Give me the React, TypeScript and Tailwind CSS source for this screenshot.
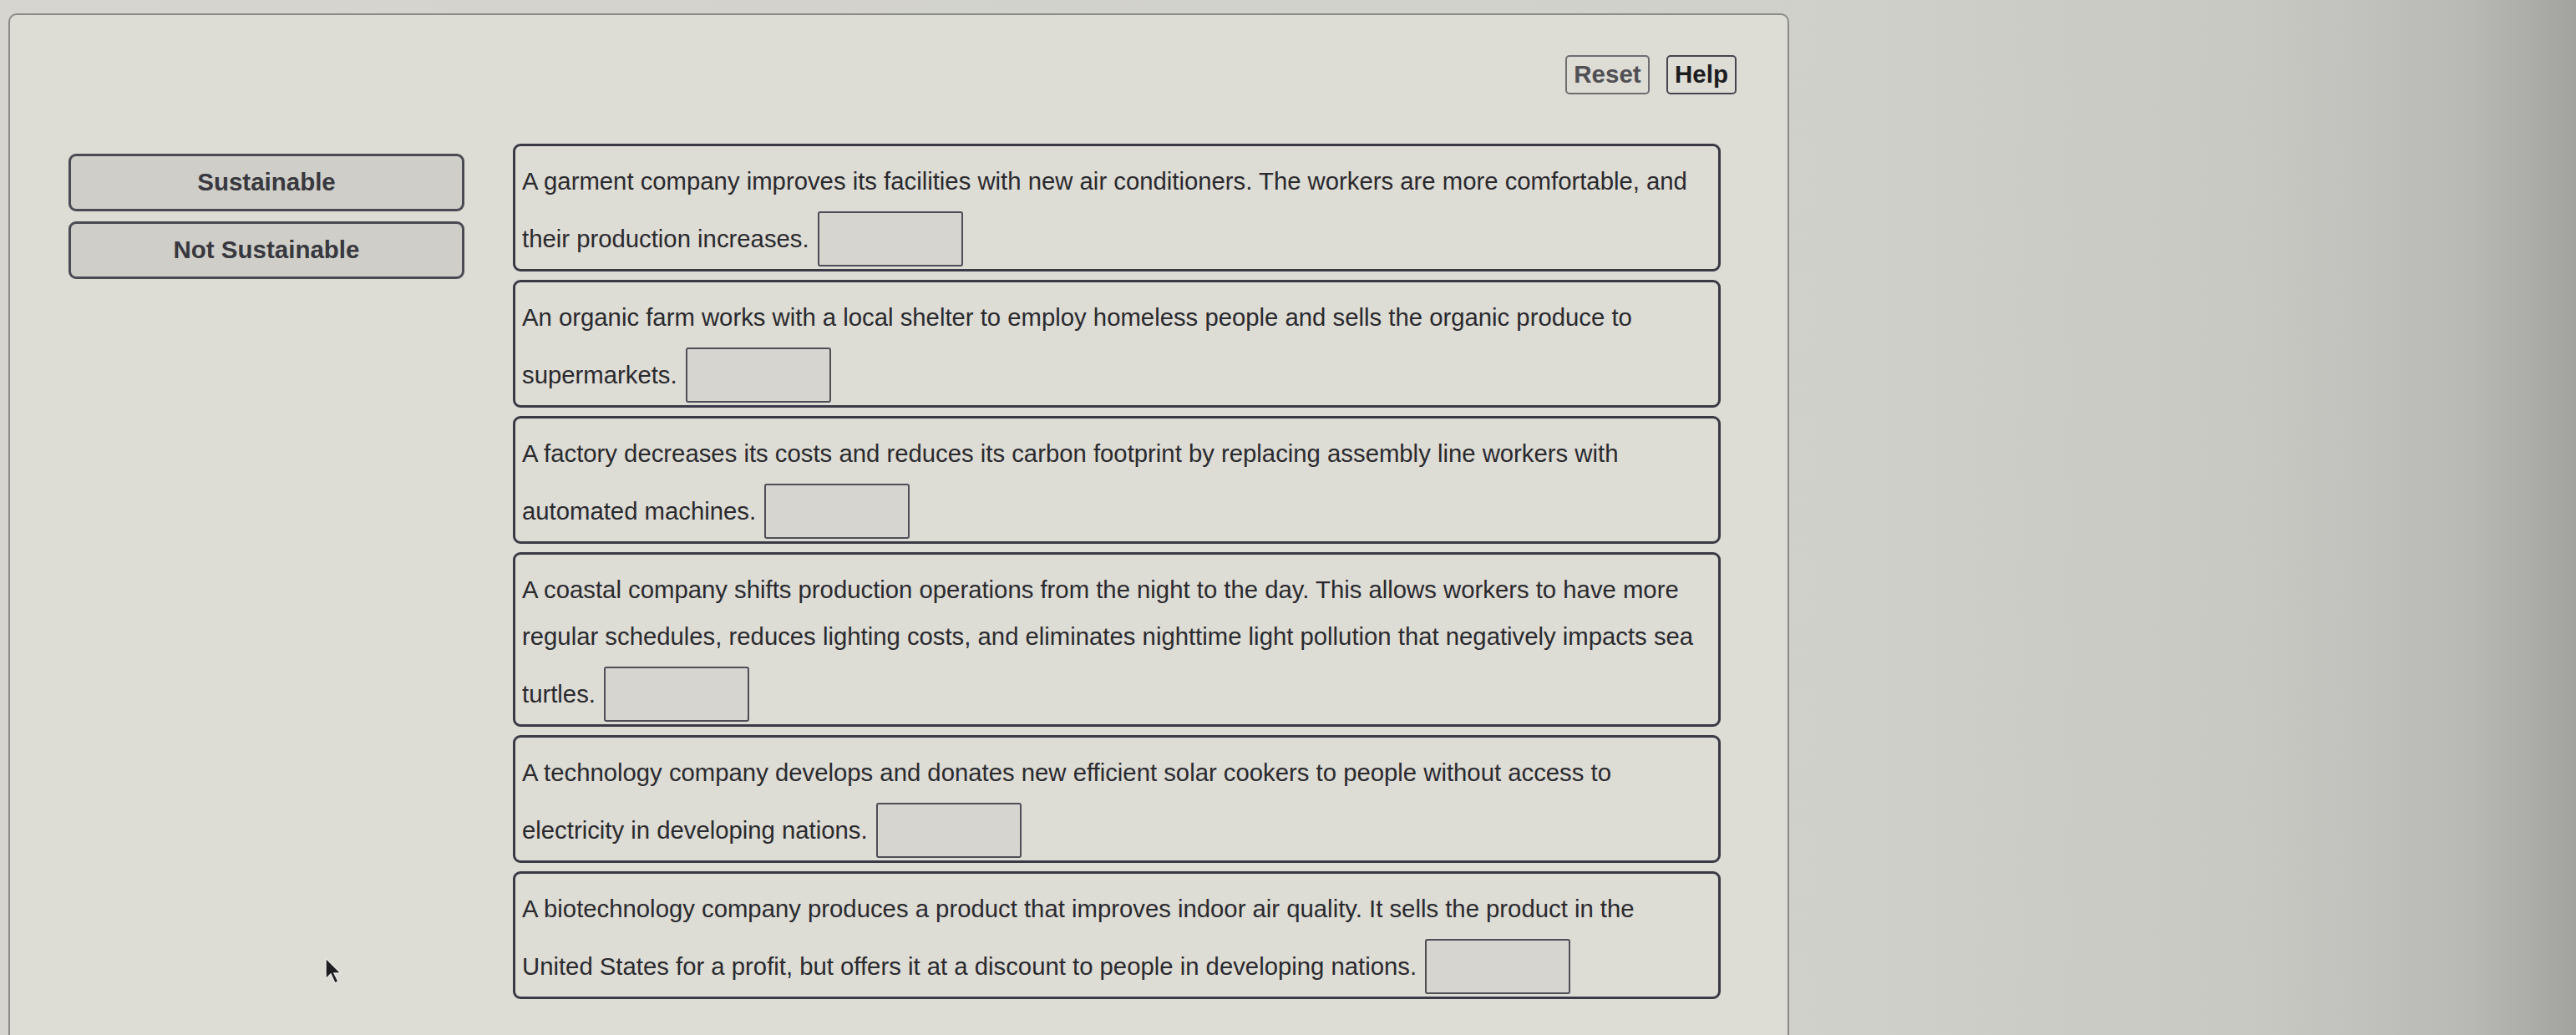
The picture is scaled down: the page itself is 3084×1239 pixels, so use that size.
import React from "react";

type Item = { lines: string[]; last: string };

const items: Item[] = [
  {
    lines: [
      "A garment company improves its facilities with new air conditioners. The workers are more comfortable, and",
    ],
    last: "their production increases.",
  },
  {
    lines: [
      "An organic farm works with a local shelter to employ homeless people and sells the organic produce to",
    ],
    last: "supermarkets.",
  },
  {
    lines: [
      "A factory decreases its costs and reduces its carbon footprint by replacing assembly line workers with",
    ],
    last: "automated machines.",
  },
  {
    lines: [
      "A coastal company shifts production operations from the night to the day. This allows workers to have more",
      "regular schedules, reduces lighting costs, and eliminates nighttime light pollution that negatively impacts sea",
    ],
    last: "turtles.",
  },
  {
    lines: [
      "A technology company develops and donates new efficient solar cookers to people without access to",
    ],
    last: "electricity in developing nations.",
  },
  {
    lines: [
      "A biotechnology company produces a product that improves indoor air quality. It sells the product in the",
    ],
    last: "United States for a profit, but offers it at a discount to people in developing nations.",
  },
];

function Card({ item }: { item: Item }) {
  return (
    <div className="rounded-[9px] border-[3px] border-[#3a3a47] bg-[#dddcd5] px-[8px] pt-[14px] pb-[3px]">
      {item.lines.map((l, i) => (
        <div key={i} className="h-[56px] whitespace-nowrap leading-[56px]">
          {l}
        </div>
      ))}
      <div className="mt-[8px] flex h-[66px] items-center whitespace-nowrap">
        <span>{item.last}</span>
        <div className="ml-[10px] h-[66px] w-[174px] rounded-[3px] border-2 border-[#4e4e56] bg-[#d6d5d0]" />
      </div>
    </div>
  );
}

export default function App() {
  return (
    <div
      className="relative h-[1239px] w-[3084px] overflow-hidden bg-[linear-gradient(to_right,#d6d5d0_0%,#d0d0cb_72%,#c8c8c3_88%,#b8b9b5_96%,#a2a39f_100%)] pt-[16px] pl-[10px] text-[#2a2a2e]"
      style={{ fontFamily: '"Liberation Sans", Arial, sans-serif' }}
    >
      <div className="h-[1300px] w-[2132px] rounded-[10px] border-2 border-[#8b8b89] bg-[#dddcd5]">
        <div className="flex justify-end gap-[20px] pt-[48px] pr-[61px]">
          <div className="flex h-[47px] w-[101px] items-center justify-center rounded-[5px] border-2 border-[#6e6e72] text-[29.5px] font-bold text-[#505054]">
            Reset
          </div>
          <div className="flex h-[47px] w-[84px] items-center justify-center rounded-[5px] border-2 border-[#45454d] text-[29.5px] font-bold text-[#1c1c20]">
            Help
          </div>
        </div>
        <div className="mt-[59px] flex">
          <div className="ml-[70px] mt-[12px] flex w-[474px] flex-col gap-[12px]">
            <div className="flex h-[69px] items-center justify-center rounded-[9px] border-[3px] border-[#4a4a55] bg-[#cfcec9] text-[29.5px] font-bold text-[#38383e]">
              Sustainable
            </div>
            <div className="flex h-[69px] items-center justify-center rounded-[9px] border-[3px] border-[#4a4a55] bg-[#cfcec9] text-[29.5px] font-bold text-[#38383e]">
              Not Sustainable
            </div>
          </div>
          <div className="ml-[58px] flex w-[1446px] flex-col gap-[10px] text-[29.3px]">
            {items.map((it, i) => (
              <Card key={i} item={it} />
            ))}
          </div>
        </div>
      </div>
      <svg
        className="absolute left-[388px] top-[1146px]"
        width="22"
        height="34"
        viewBox="0 0 22 34"
      >
        <path
          d="M2 1 L2 26 L8 20 L13 31 L17 29 L12 19 L20 19 Z"
          fill="#1e1e22"
          stroke="#e8e8e4"
          strokeWidth="1.5"
        />
      </svg>
    </div>
  );
}
